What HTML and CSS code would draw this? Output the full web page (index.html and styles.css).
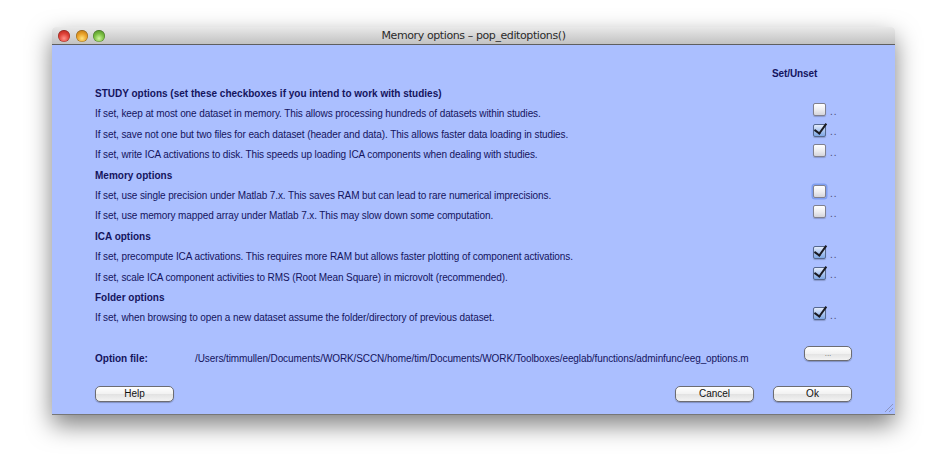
FILE: index.html
```html
<!DOCTYPE html>
<html>
<head>
<meta charset="utf-8">
<title>Memory options - pop_editoptions()</title>
<link rel="stylesheet" href="styles.css">
</head>
<body>
<div class="window">
  <div class="titlebar">
    <div class="lights">
      <span class="light red"></span>
      <span class="light yellow"></span>
      <span class="light green"></span>
    </div>
    <div class="title">Memory options – pop_editoptions()</div>
  </div>
  <div class="content">
    <div class="row"><span class="txt"></span><span class="hdr-set">Set/Unset</span></div>
    <div class="row"><span class="txt bold">STUDY options (set these checkboxes if you intend to work with studies)</span></div>
    <div class="row"><span class="txt">If set, keep at most one dataset in memory. This allows processing hundreds of datasets within studies.</span><span class="cb"></span><span class="dots">..</span></div>
    <div class="row"><span class="txt">If set, save not one but two files for each dataset (header and data). This allows faster data loading in studies.</span><span class="cb on"></span><span class="dots">..</span></div>
    <div class="row"><span class="txt">If set, write ICA activations to disk. This speeds up loading ICA components when dealing with studies.</span><span class="cb"></span><span class="dots">..</span></div>
    <div class="row"><span class="txt bold">Memory options</span></div>
    <div class="row"><span class="txt">If set, use single precision under Matlab 7.x. This saves RAM but can lead to rare numerical imprecisions.</span><span class="cb focus"></span><span class="dots">..</span></div>
    <div class="row"><span class="txt">If set, use memory mapped array under Matlab 7.x. This may slow down some computation.</span><span class="cb"></span><span class="dots">..</span></div>
    <div class="row"><span class="txt bold">ICA options</span></div>
    <div class="row"><span class="txt">If set, precompute ICA activations. This requires more RAM but allows faster plotting of component activations.</span><span class="cb on"></span><span class="dots">..</span></div>
    <div class="row"><span class="txt">If set, scale ICA component activities to RMS (Root Mean Square) in microvolt (recommended).</span><span class="cb on"></span><span class="dots">..</span></div>
    <div class="row"><span class="txt bold">Folder options</span></div>
    <div class="row"><span class="txt">If set, when browsing to open a new dataset assume the folder/directory of previous dataset.</span><span class="cb on"></span><span class="dots">..</span></div>
    <div class="filerow">
      <span class="txt bold flabel">Option file:</span>
      <span class="txt fpath">/Users/timmullen/Documents/WORK/SCCN/home/tim/Documents/WORK/Toolboxes/eeglab/functions/adminfunc/eeg_options.m</span>
      <button class="btn small">...</button>
    </div>
    <div class="btnrow">
      <button class="btn">Help</button>
      <span class="spacer"></span>
      <button class="btn">Cancel</button>
      <button class="btn">Ok</button>
    </div>
    <div class="grip"></div>
  </div>
</div>
</body>
</html>
```
FILE: styles.css
```css
html, body {
  margin: 0;
  padding: 0;
  background: #ffffff;
}
body {
  width: 949px;
  height: 458px;
  overflow: hidden;
}
.window {
  margin-left: 52px;
  margin-top: 27px;
  width: 843px;
  height: 388px;
  display: flex;
  flex-direction: column;
  box-shadow: 0 10px 24px rgba(0,0,0,0.5);
  border-radius: 4px 4px 0 0;
}
.titlebar {
  height: 17px;
  flex: none;
  display: flex;
  align-items: center;
  background: linear-gradient(#e9e9e9, #c2c2c2);
  border-bottom: 1px solid #5f5f5f;
  border-radius: 4px 4px 0 0;
  position: relative;
}
.lights {
  display: flex;
  gap: 5.5px;
  padding-left: 6px;
}
.light {
  width: 12px;
  height: 12px;
  border-radius: 50%;
  box-shadow: inset 0 0 0 0.5px rgba(0,0,0,0.35);
}
.red { background: radial-gradient(circle at 50% 70%, #ff8f86 0%, #e0443a 45%, #a5160f 100%); }
.yellow { background: radial-gradient(circle at 50% 70%, #ffe27a 0%, #eaa22a 45%, #a9650a 100%); }
.green { background: radial-gradient(circle at 50% 70%, #cdf59a 0%, #7cc043 45%, #3d7b1c 100%); }
.title {
  position: absolute;
  left: 0;
  right: 0;
  top: 0;
  line-height: 17px;
  text-align: center;
  font-family: "DejaVu Sans", sans-serif;
  font-size: 11px;
  letter-spacing: -0.4px;
  color: #2b2b2b;
}
.content {
  flex: 1;
  background: #abbfff;
  padding: 18px 0 0 43px;
  display: flex;
  flex-direction: column;
  border-bottom: 1px solid #777;
  position: relative;
}
.row {
  height: 20.4px;
  display: flex;
  align-items: center;
}
.txt {
  font-family: "Liberation Sans", Arial, sans-serif;
  font-size: 10px;
  color: #14145e;
  letter-spacing: -0.1px;
  white-space: nowrap;
}
.row .txt { flex: 1; }
.txt.bold { font-weight: bold; letter-spacing: 0; }
.hdr-set {
  font-family: "Liberation Sans", Arial, sans-serif;
  font-size: 10px;
  font-weight: bold;
  color: #14145e;
  letter-spacing: -0.1px;
  width: 123px;
}
.cb {
  width: 13px;
  height: 13px;
  flex: none;
  margin-top: -8px;
  border: 1px solid #80808e;
  border-radius: 2px;
  background: linear-gradient(#ffffff, #ececef 55%, #d4d4da);
  box-shadow: 0 1px 1px rgba(0,0,0,0.2);
  box-sizing: border-box;
  position: relative;
}
.cb.focus { box-shadow: 0 0 0 1.5px #7e9ef0; }
.cb.on {
  background: linear-gradient(#e4ecfb, #a9c4ef 55%, #7fa8e6);
  border-color: #56688e;
}
.cb.on::after {
  content: "";
  position: absolute;
  left: 3px;
  top: -4px;
  width: 5px;
  height: 11px;
  border-right: 2.2px solid #1a1a22;
  border-bottom: 2.2px solid #1a1a22;
  transform: rotate(36deg);
  transform-origin: 50% 50%;
}
.dots {
  width: 69px;
  padding-left: 4px;
  box-sizing: border-box;
  flex: none;
  font-family: "Liberation Sans", Arial, sans-serif;
  font-size: 10px;
  color: #4a4a72;
  margin-top: -5px;
  letter-spacing: 1px;
}
.filerow {
  margin-top: 20px;
  height: 20px;
  display: flex;
  align-items: center;
}
.flabel { width: 100px; flex: none; }
.txt.fpath { flex: 1; letter-spacing: -0.1px; }
.btn {
  font-family: "Liberation Sans", Arial, sans-serif;
  font-size: 10px;
  color: #111;
  height: 16px;
  padding: 0;
  border: 1px solid #6c6c72;
  border-radius: 5px;
  background: linear-gradient(#ffffff, #f1f1f1 50%, #e2e2e2 51%, #f3f3f3);
  box-shadow: 0 1px 1px rgba(0,0,0,0.25);
  width: 79px;
  line-height: 14px;
}
.btn.small {
  width: 48px;
  height: 15px;
  margin-right: 43px;
  margin-top: -10px;
  color: #666;
  font-size: 8px;
}
.btnrow {
  margin-top: 18px;
  display: flex;
  align-items: center;
  padding-right: 43px;
  gap: 19px;
}
.spacer { flex: 1; }
.grip {
  position: absolute;
  right: 2px;
  bottom: 2px;
  width: 10px;
  height: 10px;
  background: repeating-linear-gradient(135deg, transparent 0 2px, rgba(120,120,150,0.6) 2px 3px);
  clip-path: polygon(100% 0, 100% 100%, 0 100%);
}
```
